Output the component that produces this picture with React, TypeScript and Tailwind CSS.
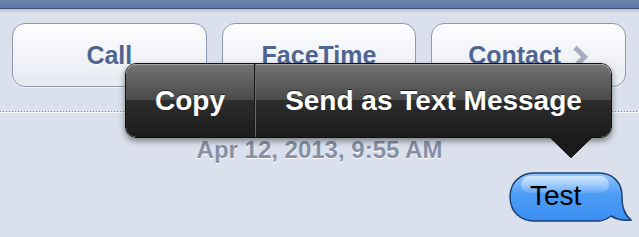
import React from "react";

const font = { fontFamily: '"Liberation Sans", Arial, Helvetica, sans-serif' };

function ActionButton({ label, chevron }: { label: string; chevron?: boolean }) {
  return (
    <div className="flex h-[64px] flex-1 items-center justify-center gap-[10px] rounded-[13px] border border-[#8d99b0] bg-gradient-to-b from-[#fdfdfe] to-[#e6eaf1] shadow-[0_1px_0_#f3f5f9] pt-[2px]">
      <span className="text-[25px] font-bold text-[#4e6591] [text-shadow:0_1px_0_#fff]">{label}</span>
      {chevron && (
        <svg width="18" height="24" viewBox="0 0 18 24" className="mt-[1px]">
          <path d="M4 2.5 L13.5 12 L4 21.5" fill="none" stroke="#a7afbe" strokeWidth="5" strokeLinejoin="miter" />
        </svg>
      )}
    </div>
  );
}

export default function App() {
  return (
    <div className="relative h-[237px] w-[639px] overflow-hidden bg-[#dbe1ec]" style={font}>
      <div className="h-[8px] bg-gradient-to-b from-[#6c86ae] to-[#5a76a1]" />
      <div className="h-[1px] bg-[#3f5580]" />
      <div className="h-[4px] bg-gradient-to-b from-[#b9c0cd] to-[#dbe1ec]" />

      <div className="mt-[10px] flex gap-[15px] pl-[12px] pr-[13px]">
        <ActionButton label="Call" />
        <ActionButton label="FaceTime" />
        <ActionButton label="Contact" chevron />
      </div>

      <div className="mt-[24px] h-[1px] w-full bg-[linear-gradient(to_right,#7c8498_50%,transparent_50%)] bg-[length:3px_1px]" />
      <div className="h-[1px] w-full bg-[#f3f5f9]" />

      <div className="mt-[25px] text-center text-[24px] font-bold leading-[24px] text-[#8790a5] [text-shadow:0_1px_0_#fff]">
        Apr 12, 2013, 9:55 AM
      </div>

      <div className="mt-[10px] flex justify-end pr-[7px]">
        <div className="relative h-[51px] w-[123px]">
          <svg width="123" height="51" viewBox="0 0 123 51" className="absolute inset-0">
            <defs>
              <linearGradient id="bub" x1="0" y1="0" x2="0" y2="1">
                <stop offset="0" stopColor="#93c8fc" />
                <stop offset="0.45" stopColor="#4c9cf6" />
                <stop offset="1" stopColor="#3b8ef2" />
              </linearGradient>
              <linearGradient id="gloss" x1="0" y1="0" x2="0" y2="1">
                <stop offset="0" stopColor="#ffffff" stopOpacity="0.6" />
                <stop offset="1" stopColor="#ffffff" stopOpacity="0.1" />
              </linearGradient>
            </defs>
            <path
              d="M25 1 H90 C104 1 113 11 113 24 C113 35 115 42 122 48 C114 49 107 47 102 44 C98 47 94 49 90 49 H25 C11 49 1 39 1 25 C1 11 11 1 25 1 Z"
              fill="url(#bub)"
              stroke="#1d3f74"
              strokeWidth="1.5"
            />
            <rect x="12" y="4" width="88" height="17" rx="8.5" fill="url(#gloss)" />
          </svg>
          <span className="absolute left-[21px] top-[7px] text-[28px] leading-[34px] text-black">Test</span>
        </div>
      </div>

      {/* copy / send popover */}
      <div className="absolute left-[125px] top-[63px] h-[75px] w-[487px] rounded-[11px] border border-[#111] shadow-[0_3px_6px_rgba(0,0,0,0.45)]">
        <div className="flex h-full overflow-hidden rounded-[10px] bg-[linear-gradient(to_bottom,#737373_0%,#4a4a4a_49%,#2d2d2d_50%,#1b1b1b_100%)] shadow-[inset_0_1px_0_rgba(255,255,255,0.35)]">
          <div className="flex w-[128px] items-center justify-center text-[28px] font-bold text-white [text-shadow:0_-1px_0_rgba(0,0,0,0.6)]">
            Copy
          </div>
          <div className="w-[1px] bg-[#1a1a1a]" />
          <div className="w-[1px] bg-[#6a6a6a]" />
          <div className="flex flex-1 items-center justify-center text-[28px] font-bold text-white [text-shadow:0_-1px_0_rgba(0,0,0,0.6)]">
            Send as Text Message
          </div>
        </div>
      </div>
      <svg width="44" height="22" viewBox="0 0 44 22" className="absolute left-[549px] top-[137px]">
        <path d="M0 0 L44 0 L22 21 Z" fill="#1b1b1b" />
        <path d="M1 0 L22 20.5 L43 0" fill="none" stroke="#111" strokeWidth="1" />
      </svg>
    </div>
  );
}
